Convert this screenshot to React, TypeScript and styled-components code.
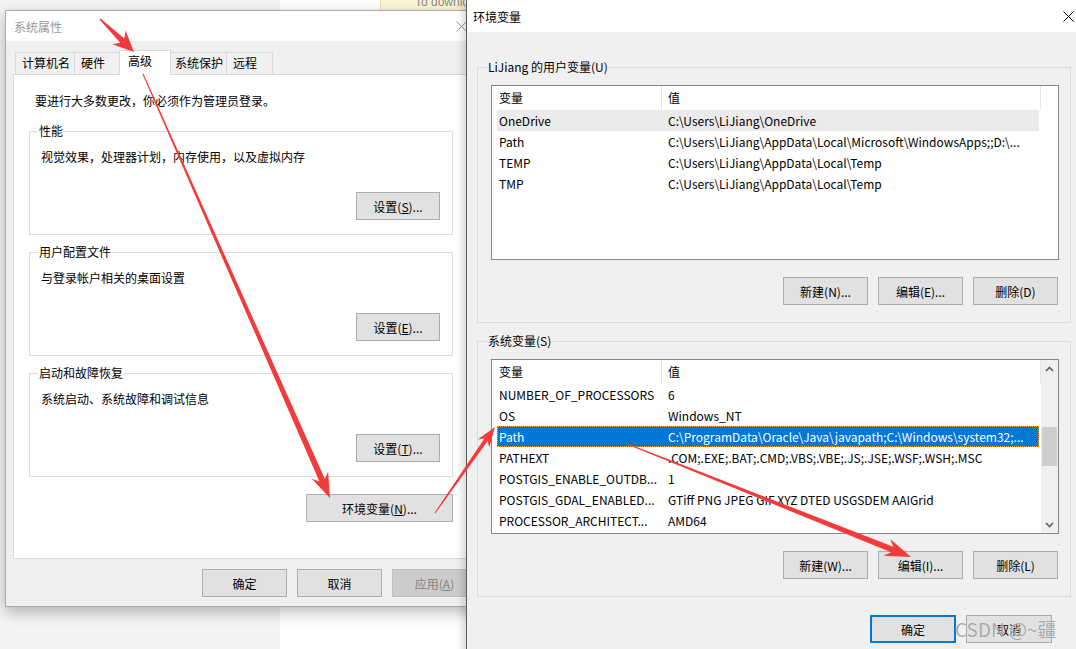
import React from "react";
import styled, { createGlobalStyle } from "styled-components";

const FONT = `"Noto Sans CJK SC", "Noto Sans", sans-serif`;

const GlobalStyle = createGlobalStyle`
  html, body { margin: 0; padding: 0; width: 1076px; height: 649px; overflow: hidden; }
  body { font-family: ${FONT}; font-size: 12px; color: #000; background: #fff; }
  #root { width: 1076px; height: 649px; }
`;

const Desktop = styled.div`
  position: relative;
  width: 1076px;
  height: 649px;
  display: flex;
  overflow: hidden;
  font-family: ${FONT};
  font-size: 12px;
`;

const Sidebar = styled.div`
  flex: none;
  width: 280px;
  background: #f3f4f6;
`;

const MainArea = styled.div`
  flex: 1;
  background: #fff;
  display: flex;
  flex-direction: column;
`;

const Banner = styled.div`
  margin-left: 100px;
  width: 120px;
  height: 10px;
  background: #fdf6d6;
  border-left: 1px solid #e8dfae;
  overflow: hidden;
  padding-left: 34px;
  color: #8a8a8a;
  font-family: "Liberation Sans", Arial, sans-serif;
  font-size: 12px;
  line-height: 14px;
  white-space: nowrap;
`;

const BannerText = styled.span`
  display: block;
  margin-top: -5px;
`;

const Window = styled.section<{ $left: number; $top: number; $w: number; $h: number; $active?: boolean }>`
  position: absolute;
  left: ${(p) => p.$left}px;
  top: ${(p) => p.$top}px;
  width: ${(p) => p.$w}px;
  height: ${(p) => p.$h}px;
  box-sizing: border-box;
  display: flex;
  flex-direction: column;
  background: #f0f0f0;
  border: ${(p) => (p.$active ? "none" : "1px solid #aaaaaa")};
  border-left: ${(p) => (p.$active ? "1px solid #5c5c5c" : "1px solid #aaaaaa")};
  box-shadow: ${(p) => (p.$active ? "-3px 0 8px rgba(0,0,0,0.18)" : "0 5px 14px rgba(0,0,0,0.28)")};
`;

const TitleBar = styled.div<{ $h: number; $pad: number }>`
  flex: none;
  height: ${(p) => p.$h}px;
  display: flex;
  align-items: center;
  background: #fff;
  padding-left: ${(p) => p.$pad}px;
`;

const Title = styled.span<{ $dim?: boolean }>`
  flex: 1;
  color: ${(p) => (p.$dim ? "#999" : "#000")};
  font-size: 12px;
`;

const CloseBox = styled.div<{ $w: number }>`
  width: ${(p) => p.$w}px;
  height: 100%;
  display: flex;
  align-items: center;
  justify-content: center;
`;

const LeftBody = styled.div`
  flex: 1;
  display: flex;
  flex-direction: column;
  padding: 11px 7px 10px;
`;

const TabStrip = styled.div`
  display: flex;
  align-items: flex-end;
  height: 22px;
  margin-left: 2px;
`;

const Tab = styled.div<{ $w: number; $sel?: boolean }>`
  position: relative;
  box-sizing: border-box;
  width: ${(p) => p.$w + (p.$sel ? 4 : 0)}px;
  height: ${(p) => (p.$sel ? 25 : 22)}px;
  margin: ${(p) => (p.$sel ? "0 -2px -1px -2px" : "0")};
  margin-right: ${(p) => (p.$sel ? "-3px" : "-1px")};
  padding-left: ${(p) => (p.$sel ? 8 : 6)}px;
  padding-top: 2px;
  border: 1px solid #d9d9d9;
  border-bottom: none;
  background: ${(p) => (p.$sel ? "#fff" : "#f0f0f0")};
  z-index: ${(p) => (p.$sel ? 2 : 1)};
  line-height: 16px;
  white-space: nowrap;
`;

const Panel = styled.div`
  box-sizing: border-box;
  width: 464px;
  height: 485px;
  background: #fff;
  border: 1px solid #d9d9d9;
  padding: 18px 0 0 15px;
  display: flex;
  flex-direction: column;
`;

const Intro = styled.div`
  margin-left: 6px;
  line-height: 16px;
  height: 16px;
  margin-bottom: 22px;
`;

const GroupStack = styled.div`
  display: flex;
  flex-direction: column;
  gap: 17px;
`;

const Group = styled.div<{ $w: number; $h: number; $pad: string }>`
  position: relative;
  box-sizing: border-box;
  width: ${(p) => p.$w}px;
  height: ${(p) => p.$h}px;
  border: 1px solid #dcdcdc;
  padding: ${(p) => p.$pad};
  display: flex;
  flex-direction: column;
`;

const Legend = styled.span<{ $bg: string; $x: number }>`
  position: absolute;
  top: -9px;
  left: ${(p) => p.$x}px;
  padding: 0 1px;
  background: ${(p) => p.$bg};
  line-height: 16px;
  white-space: nowrap;
`;

const Desc = styled.div`
  line-height: 16px;
`;

const Btn = styled.button<{ $w?: number; $default?: boolean }>`
  flex: none;
  box-sizing: border-box;
  width: ${(p) => p.$w ?? 84}px;
  height: 28px;
  margin: 0;
  padding: 0;
  font-family: ${FONT};
  font-size: 12px;
  color: #000;
  background: #e1e1e1;
  border: ${(p) => (p.$default ? "2px solid #0078d7" : "1px solid #adadad")};
  display: flex;
  align-items: center;
  justify-content: center;
  white-space: nowrap;
  &:disabled {
    background: #cccccc;
    border-color: #bfbfbf;
    color: #838383;
  }
`;

const GroupButton = styled(Btn)`
  align-self: flex-end;
  margin-top: auto;
`;

const EnvRow = styled.div`
  width: 424px;
  display: flex;
  justify-content: flex-end;
  margin-top: 17px;
`;

const ButtonRow = styled.div<{ $mt: number; $pl?: number; $pr?: number; $end?: boolean; $w?: number }>`
  display: flex;
  gap: 10px;
  margin-top: ${(p) => p.$mt}px;
  padding-left: ${(p) => p.$pl ?? 0}px;
  padding-right: ${(p) => p.$pr ?? 0}px;
  justify-content: ${(p) => (p.$end ? "flex-end" : "flex-start")};
  ${(p) => (p.$w ? `width: ${p.$w}px; box-sizing: border-box;` : "")}
`;

const RightBody = styled.div`
  flex: 1;
  display: flex;
  flex-direction: column;
  padding: 35px 0 0 10px;
  gap: 18px;
`;

const ListBox = styled.div`
  box-sizing: border-box;
  width: 568px;
  height: 175px;
  border: 1px solid #828790;
  background: #fff;
  display: flex;
  overflow: hidden;
  flex: none;
`;

const ListMain = styled.div`
  flex: 1;
  display: flex;
  flex-direction: column;
  overflow: hidden;
`;

const Header = styled.div`
  flex: none;
  display: flex;
  height: 24px;
  border-right: 1px solid #e5e5e5;
`;

const HeadCell = styled.div<{ $w?: number; $pl: number }>`
  ${(p) => (p.$w ? `width: ${p.$w}px; flex: none;` : "flex: 1;")}
  box-sizing: border-box;
  padding-left: ${(p) => p.$pl}px;
  display: flex;
  align-items: center;
  padding-bottom: 1px;
  border-right: ${(p) => (p.$w ? "1px solid #e5e5e5" : "none")};
`;

const Rows = styled.div`
  display: flex;
  flex-direction: column;
  padding-left: 5px;
`;

const Row = styled.div<{ $state?: "focus" | "dim" }>`
  box-sizing: border-box;
  width: 542px;
  height: 21px;
  flex: none;
  display: flex;
  align-items: center;
  padding-bottom: 1px;
  background: ${(p) => (p.$state === "focus" ? "#0078d7" : p.$state === "dim" ? "#ebebeb" : "transparent")};
  color: ${(p) => (p.$state === "focus" ? "#fff" : "#000")};
  border: 1px ${(p) => (p.$state === "focus" ? "dotted #f4a340" : "solid transparent")};
  white-space: nowrap;
`;

const NameCell = styled.div`
  width: 164px;
  flex: none;
  box-sizing: border-box;
  padding-left: 1px;
  overflow: hidden;
`;

const ValueCell = styled.div`
  flex: 1;
  padding-left: 6px;
  overflow: hidden;
`;

const ScrollBar = styled.div<{ $show: boolean }>`
  flex: none;
  width: 17px;
  display: flex;
  flex-direction: column;
  background: ${(p) => (p.$show ? "#f0f0f0" : "#fff")};
`;

const ScrollArrow = styled.div`
  flex: none;
  height: 17px;
  display: flex;
  align-items: center;
  justify-content: center;
`;

const Track = styled.div`
  flex: 1;
  display: flex;
  flex-direction: column;
`;

const Thumb = styled.div<{ $top: number; $h: number }>`
  margin: ${(p) => p.$top}px 1px 0;
  height: ${(p) => p.$h}px;
  background: #cdcdcd;
`;

const Overlay = styled.svg`
  position: absolute;
  left: 0;
  top: 0;
  width: 1076px;
  height: 649px;
  pointer-events: none;
  z-index: 20;
`;

const Watermark = styled.div`
  position: absolute;
  left: 955px;
  top: 617px;
  z-index: 21;
  font-family: ${FONT};
  font-size: 19px;
  line-height: 24px;
  color: rgba(140, 140, 140, 0.75);
  text-shadow: 0 0 1px rgba(255, 255, 255, 0.9);
  white-space: nowrap;
`;

function CloseIcon({ color }: { color: string }) {
  return (
    <svg width="11" height="11" viewBox="0 0 11 11">
      <path d="M0.5 0.5 L10.5 10.5 M10.5 0.5 L0.5 10.5" stroke={color} strokeWidth="1" fill="none" />
    </svg>
  );
}

function Chevron({ up }: { up?: boolean }) {
  return (
    <svg width="9" height="6" viewBox="0 0 9 6">
      <polyline
        points={up ? "1,5 4.5,1.5 8,5" : "1,1 4.5,4.5 8,1"}
        stroke="#606060"
        strokeWidth="1.6"
        fill="none"
      />
    </svg>
  );
}

function arrowPoints(x1: number, y1: number, x2: number, y2: number, w0: number, w1: number, hw: number, hl: number) {
  const dx = x2 - x1;
  const dy = y2 - y1;
  const L = Math.hypot(dx, dy);
  const ux = dx / L;
  const uy = dy / L;
  const px = -uy;
  const py = ux;
  const jx = x2 - ux * hl * 0.78;
  const jy = y2 - uy * hl * 0.78;
  const bx = x2 - ux * hl;
  const by = y2 - uy * hl;
  const pts: [number, number][] = [
    [x1 + (px * w0) / 2, y1 + (py * w0) / 2],
    [jx + (px * w1) / 2, jy + (py * w1) / 2],
    [bx + (px * hw) / 2, by + (py * hw) / 2],
    [x2, y2],
    [bx - (px * hw) / 2, by - (py * hw) / 2],
    [jx - (px * w1) / 2, jy - (py * w1) / 2],
    [x1 - (px * w0) / 2, y1 - (py * w0) / 2],
  ];
  return pts.map((p) => `${p[0].toFixed(1)},${p[1].toFixed(1)}`).join(" ");
}

const ARROWS = [
  arrowPoints(100, 19, 134, 52, 1.5, 6, 19, 21),
  arrowPoints(143, 74, 330, 498, 1, 6, 18, 25),
  arrowPoints(435, 513, 495, 427, 1, 4, 14, 20),
  arrowPoints(625, 443, 911, 557, 1, 6, 18, 26),
];

type Item = { name: string; value: string; state?: "focus" | "dim" };

const USER_VARS: Item[] = [
  { name: "OneDrive", value: "C:\\Users\\LiJiang\\OneDrive", state: "dim" },
  { name: "Path", value: "C:\\Users\\LiJiang\\AppData\\Local\\Microsoft\\WindowsApps;;D:\\..." },
  { name: "TEMP", value: "C:\\Users\\LiJiang\\AppData\\Local\\Temp" },
  { name: "TMP", value: "C:\\Users\\LiJiang\\AppData\\Local\\Temp" },
];

const SYS_VARS: Item[] = [
  { name: "NUMBER_OF_PROCESSORS", value: "6" },
  { name: "OS", value: "Windows_NT" },
  { name: "Path", value: "C:\\ProgramData\\Oracle\\Java\\javapath;C:\\Windows\\system32;...", state: "focus" },
  { name: "PATHEXT", value: ".COM;.EXE;.BAT;.CMD;.VBS;.VBE;.JS;.JSE;.WSF;.WSH;.MSC" },
  { name: "POSTGIS_ENABLE_OUTDB...", value: "1" },
  { name: "POSTGIS_GDAL_ENABLED...", value: "GTiff PNG JPEG GIF XYZ DTED USGSDEM AAIGrid" },
  { name: "PROCESSOR_ARCHITECT...", value: "AMD64" },
];

function VarList({ items, scroll }: { items: Item[]; scroll?: boolean }) {
  return (
    <ListBox>
      <ListMain>
        <Header>
          <HeadCell $w={170} $pl={7}>变量</HeadCell>
          <HeadCell $pl={6}>值</HeadCell>
        </Header>
        <Rows>
          {items.map((it) => (
            <Row key={it.name} $state={it.state}>
              <NameCell>{it.name}</NameCell>
              <ValueCell>{it.value}</ValueCell>
            </Row>
          ))}
        </Rows>
      </ListMain>
      <ScrollBar $show={!!scroll}>
        {scroll && (
          <>
            <ScrollArrow>
              <Chevron up />
            </ScrollArrow>
            <Track>
              <Thumb $top={50} $h={39} />
            </Track>
            <ScrollArrow>
              <Chevron />
            </ScrollArrow>
          </>
        )}
      </ScrollBar>
    </ListBox>
  );
}

function VarGroup({
  legend,
  items,
  scroll,
  buttons,
}: {
  legend: string;
  items: Item[];
  scroll?: boolean;
  buttons: string[];
}) {
  return (
    <Group $w={594} $h={256} $pad="17px 11px 0 13px">
      <Legend $bg="#f0f0f0" $x={9}>
        {legend}
      </Legend>
      <VarList items={items} scroll={scroll} />
      <ButtonRow $mt={17} $end $pr={1}>
        {buttons.map((b) => (
          <Btn key={b} $w={85}>
            {b}
          </Btn>
        ))}
      </ButtonRow>
    </Group>
  );
}

function SettingsGroup({ legend, desc, button }: { legend: string; desc: string; button: React.ReactNode }) {
  return (
    <Group $w={424} $h={104} $pad="17px 12px 14px 11px">
      <Legend $bg="#fff" $x={8}>
        {legend}
      </Legend>
      <Desc>{desc}</Desc>
      <GroupButton $w={84}>{button}</GroupButton>
    </Group>
  );
}

export default function App() {
  return (
    <>
      <GlobalStyle />
      <Desktop>
        <Sidebar />
        <MainArea>
          <Banner>
            <BannerText>To download the latest</BannerText>
          </Banner>
        </MainArea>

        <Window $left={5} $top={10} $w={480} $h={597}>
          <TitleBar $h={30} $pad={8}>
            <Title $dim>系统属性</Title>
            <CloseBox $w={46}>
              <CloseIcon color="#999" />
            </CloseBox>
          </TitleBar>
          <LeftBody>
            <TabStrip>
              <Tab $w={60}>计算机名</Tab>
              <Tab $w={48}>硬件</Tab>
              <Tab $w={48} $sel>
                高级
              </Tab>
              <Tab $w={59}>系统保护</Tab>
              <Tab $w={47}>远程</Tab>
            </TabStrip>
            <Panel>
              <Intro>要进行大多数更改，你必须作为管理员登录。</Intro>
              <GroupStack>
                <SettingsGroup
                  legend="性能"
                  desc="视觉效果，处理器计划，内存使用，以及虚拟内存"
                  button={
                    <>
                      设置(<u>S</u>)...
                    </>
                  }
                />
                <SettingsGroup
                  legend="用户配置文件"
                  desc="与登录帐户相关的桌面设置"
                  button={
                    <>
                      设置(<u>E</u>)...
                    </>
                  }
                />
                <SettingsGroup
                  legend="启动和故障恢复"
                  desc="系统启动、系统故障和调试信息"
                  button={
                    <>
                      设置(<u>T</u>)...
                    </>
                  }
                />
              </GroupStack>
              <EnvRow>
                <Btn $w={147}>
                  环境变量(<u>N</u>)...
                </Btn>
              </EnvRow>
            </Panel>
            <ButtonRow $mt={10} $pl={189}>
              <Btn $w={85}>确定</Btn>
              <Btn $w={85}>取消</Btn>
              <Btn $w={85} disabled>
                应用(<u>A</u>)
              </Btn>
            </ButtonRow>
          </LeftBody>
        </Window>

        <Window $left={466} $top={0} $w={620} $h={660} $active>
          <TitleBar $h={32} $pad={6}>
            <Title>环境变量</Title>
            <CloseBox $w={36}>
              <CloseIcon color="#000" />
            </CloseBox>
          </TitleBar>
          <RightBody>
            <VarGroup
              legend="LiJiang 的用户变量(U)"
              items={USER_VARS}
              buttons={["新建(N)...", "编辑(E)...", "删除(D)"]}
            />
            <VarGroup
              legend="系统变量(S)"
              items={SYS_VARS}
              scroll
              buttons={["新建(W)...", "编辑(I)...", "删除(L)"]}
            />
            <ButtonRow $mt={0} $end $w={594} $pr={19}>
              <Btn $w={86} $default>
                确定
              </Btn>
              <Btn $w={86}>取消</Btn>
            </ButtonRow>
          </RightBody>
        </Window>

        <Overlay viewBox="0 0 1076 649">
          {ARROWS.map((pts, i) => (
            <polygon key={i} points={pts} fill="#f23b3b" />
          ))}
        </Overlay>
        <Watermark>CSDN @~疆</Watermark>
      </Desktop>
    </>
  );
}
